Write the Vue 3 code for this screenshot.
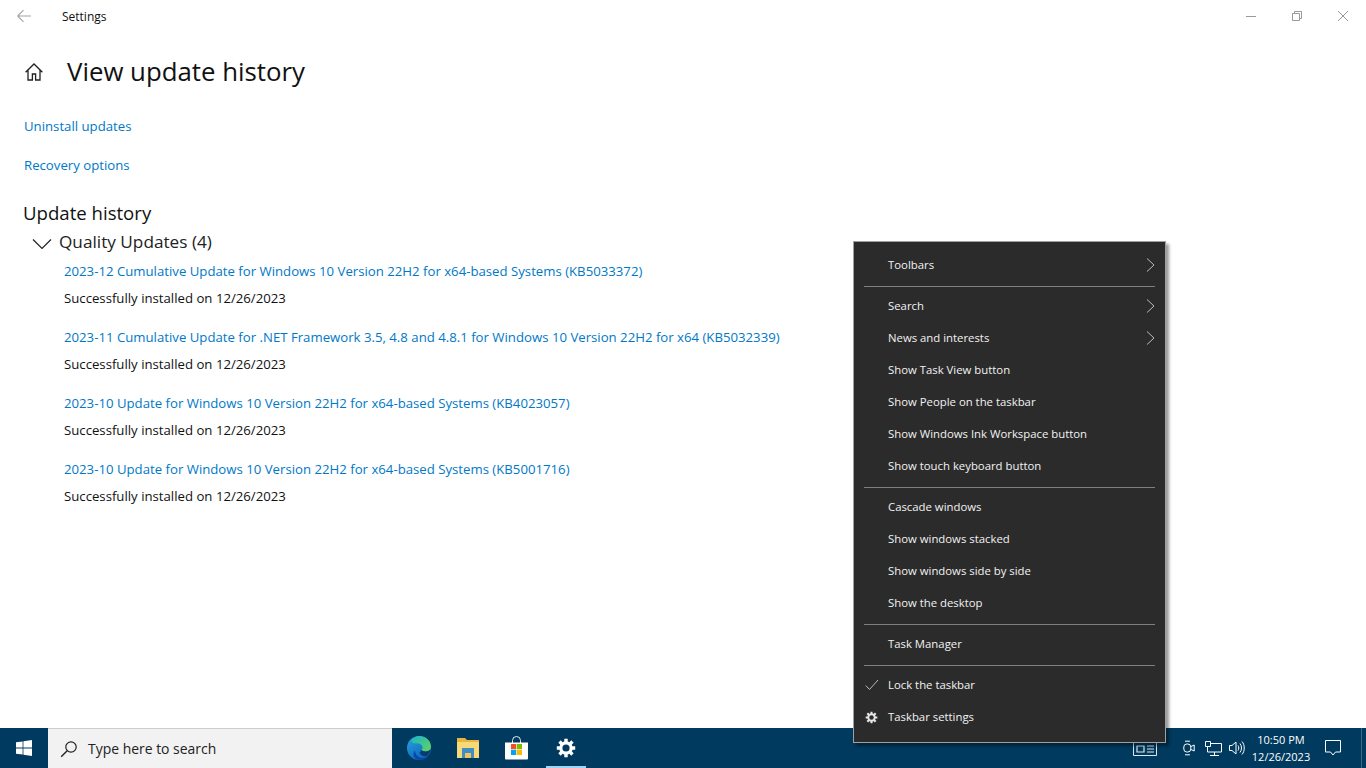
<template>
  <div class="screen">
    <div class="window">
      <header class="titlebar">
        <svg class="back" width="16" height="16" viewBox="0 0 16 16">
          <path d="M15 8H2M7.500 2.200 1.700 8l5.800 5.800" fill="none" stroke="#a3a3a3" stroke-width="1.100" />
        </svg>
        <span class="app-name">Settings</span>
        <div class="win-buttons">
          <svg width="12" height="12" viewBox="0 0 12 12"><path d="M1 6.500h10" stroke="#999" fill="none" /></svg>
          <svg width="12" height="12" viewBox="0 0 12 12">
            <path d="M1.500 3.500h7v7h-7zM3.500 3.500v-2h7v7h-2" stroke="#999" fill="none" />
          </svg>
          <svg width="12" height="12" viewBox="0 0 12 12"><path d="M1 1l10 10M11 1 1 11" stroke="#999" fill="none" /></svg>
        </div>
      </header>

      <div class="page-head">
        <svg class="home" width="20" height="20" viewBox="0 0 20 20">
          <path
            d="M1.600 10.200 10 2l8.400 8.200M4 8v10h4.400v-6h3.200v6H16V8"
            fill="none"
            stroke="#222"
            stroke-width="1.300"
          />
        </svg>
        <h1>View update history</h1>
      </div>

      <div class="links">
        <a>Uninstall updates</a>
        <a>Recovery options</a>
      </div>

      <h2>Update history</h2>
      <div class="group-head">
        <svg width="20" height="12" viewBox="0 0 20 12">
          <path d="M1 1.500l9 9 9-9" fill="none" stroke="#222" stroke-width="1.200" />
        </svg>
        <span>Quality Updates (4)</span>
      </div>
      <ul class="updates">
        <li v-for="u in updates" :key="u">
          <a>{{ u }}</a>
          <p>Successfully installed on 12/26/2023</p>
        </li>
      </ul>
    </div>

    <footer class="taskbar">
      <div class="start">
        <svg width="16" height="16" viewBox="0 0 16 16">
          <path d="M0 2.300 6.600 1.400v6.200H0zM7.400 1.300 16 0v7.600H7.400zM0 8.400h6.600v6.200L0 13.700zM7.400 8.400H16V16l-8.600-1.300z" fill="#fff" />
        </svg>
      </div>
      <div class="search">
        <svg width="18" height="18" viewBox="0 0 18 18">
          <circle cx="11" cy="7" r="5.200" fill="none" stroke="#222" stroke-width="1.200" />
          <path d="M7.200 10.800 1.200 16.800" stroke="#222" stroke-width="1.400" />
        </svg>
        <span>Type here to search</span>
      </div>

      <div class="pinned">
        <div class="pin">
          <svg width="26" height="26" viewBox="0 0 26 26">
            <defs>
              <linearGradient id="edgeBody" x1="0" y1="0" x2="0.600" y2="1">
                <stop offset="0" stop-color="#2aa6dc" />
                <stop offset="1" stop-color="#0c64c0" />
              </linearGradient>
              <linearGradient id="edgeLobe" x1="0" y1="0" x2="1" y2="1">
                <stop offset="0" stop-color="#1db4c8" />
                <stop offset="1" stop-color="#63d35c" />
              </linearGradient>
            </defs>
            <circle cx="13" cy="13" r="12" fill="url(#edgeBody)" />
            <path
              d="M5 5.500C7.500 2.500 10.500 1 13 1c7 0 12 5 12 10.500 0 3-2 5-5.500 5-2 0-3.500-.8-4-1.700 1-1 1.300-2 1-3C15.800 9.300 13.300 8.200 11 8.200 8.500 8.200 6.400 9 5 5.500z"
              fill="url(#edgeLobe)"
            />
            <path
              d="M9 15.500c0 4 3 7 6.500 7.500 3 .3 5.500-.8 7-2.500-1.500 3-5 4.500-8.500 4.500-4 0-6.500-3-6.500-6 0-1.500.8-3 1.500-3.500z"
              fill="#0a47a0"
            />
            <path d="M15.500 14.800c.5 1 2 1.700 4 1.700 2 0 3.800-.8 5-2.200-.5 3-2 5.500-3.500 6.700-3 .8-6.500-.5-7.500-3.500 1 -.5 1.600-1.500 2-2.700z" fill="#0b3a6e" />
          </svg>
        </div>
        <div class="pin">
          <svg width="22" height="20" viewBox="0 0 22 20">
            <path d="M0 0h8l2 2h12v4H0z" fill="#e8b63f" />
            <path d="M0 4h22v16H0z" fill="#f8d978" />
            <path d="M5 10h12v10h-3v-5H8v5H5z" fill="#3f8fc4" />
            <path d="M8 15h6v5H8z" fill="#f0c65a" />
          </svg>
        </div>
        <div class="pin">
          <svg width="23" height="24" viewBox="0 0 23 24">
            <path d="M7.500 7V4.500a4 4 0 0 1 8 0V7" fill="none" stroke="#e8f0f5" stroke-width="1" />
            <path d="M0 6.500h23V22.500a1 1 0 0 1-1 1H1a1 1 0 0 1-1-1z" fill="#fff" />
            <path d="M6 8h5.200v5.200H6z" fill="#f25022" />
            <path d="M11.800 8H17v5.200h-5.200z" fill="#7fba00" />
            <path d="M6 13.800h5.200V19H6z" fill="#00a4ef" />
            <path d="M11.800 13.800H17V19h-5.200z" fill="#ffb900" />
          </svg>
        </div>
        <div class="pin active">
          <svg width="20" height="20" viewBox="0 0 20 20">
            <circle cx="10" cy="10" r="5.200" fill="none" stroke="#fff" stroke-width="3.200" />
            <path
              d="M10 .8v3.700M10 15.500v3.700M.8 10h3.700M15.500 10h3.700M3.500 3.500l2.600 2.600M13.900 13.900l2.600 2.600M3.500 16.500l2.600-2.600M13.900 6.100l2.600-2.600"
              stroke="#fff"
              stroke-width="3.400"
            />
          </svg>
        </div>
      </div>

      <div class="tray">
        <svg class="news" width="24" height="14" viewBox="0 0 24 14">
          <path d="M.5.500h23v13H.5z" fill="none" stroke="#dfe6ec" />
          <path d="M4 4h7v6H4z" fill="none" stroke="#dfe6ec" stroke-width="1.200" />
          <path d="M14 4h7M14 7h7M14 10h7" stroke="#dfe6ec" stroke-width="1.200" />
        </svg>
        <svg class="meet" width="12" height="16" viewBox="0 0 12 16">
          <path d="M2 1.200h5M2 14.800h5" stroke="#fff" />
          <rect x=".8" y="4" width="7" height="8" rx="3" fill="none" stroke="#fff" />
          <path d="M8 6.500l3.200-1.500v6L8 9.500" fill="none" stroke="#fff" />
        </svg>
        <svg class="net" width="17" height="15" viewBox="0 0 17 15">
          <path d="M2.500 2.500H16.500v8.500h-14z" fill="none" stroke="#fff" />
          <path d="M9.500 11v3M5 14.500h9" stroke="#fff" />
          <path d="M.5.500h5v5h-5z" fill="#003a5e" stroke="#fff" />
        </svg>
        <svg class="vol" width="16" height="16" viewBox="0 0 16 16">
          <path d="M.5 5.500h2.500l4-3.500v12l-4-3.500H.5z" fill="none" stroke="#fff" />
          <path d="M9 5.500c1 1.500 1 3.500 0 5M11 3.500c2 2.500 2 6.500 0 9M13 1.500c3 3.500 3 9.500 0 13" fill="none" stroke="#fff" />
        </svg>
        <div class="clock">
          <span>10:50 PM</span>
          <span>12/26/2023</span>
        </div>
        <svg class="notif" width="16" height="16" viewBox="0 0 16 16">
          <path d="M.5.500h15v11.500h-5l-2.500 3-2.500-3h-5z" fill="none" stroke="#fff" />
        </svg>
        <span class="show-desktop"></span>
      </div>
    </footer>

    <nav class="menu">
      <template v-for="(row, i) in menu" :key="i">
        <hr v-if="row.sep" />
        <div v-else class="menu-item">
          <span class="mark">
            <svg v-if="row.check" width="14" height="12" viewBox="0 0 14 12">
              <path d="M.8 6.500 4.500 10.500 13 1" fill="none" stroke="#bbb" stroke-width="1" />
            </svg>
            <svg v-if="row.gear" width="13" height="13" viewBox="0 0 20 20">
              <circle cx="10" cy="10" r="5" fill="none" stroke="#e6e6e6" stroke-width="3" />
              <path
                d="M10 1v3.500M10 15.500V19M1 10h3.500M15.500 10H19M3.600 3.600l2.500 2.500M13.900 13.900l2.500 2.500M3.600 16.400l2.500-2.500M13.900 6.100l2.500-2.500"
                stroke="#e6e6e6"
                stroke-width="3.200"
              />
            </svg>
          </span>
          <span class="label">{{ row.label }}</span>
          <svg v-if="row.sub" class="chev" width="9" height="14" viewBox="0 0 9 14">
            <path d="M1 .5 8 7l-7 6.500" fill="none" stroke="#bdbdbd" stroke-width="1" />
          </svg>
        </div>
      </template>
    </nav>
  </div>
</template>

<script setup>
const updates = [
  "2023-12 Cumulative Update for Windows 10 Version 22H2 for x64-based Systems (KB5033372)",
  "2023-11 Cumulative Update for .NET Framework 3.5, 4.8 and 4.8.1 for Windows 10 Version 22H2 for x64 (KB5032339)",
  "2023-10 Update for Windows 10 Version 22H2 for x64-based Systems (KB4023057)",
  "2023-10 Update for Windows 10 Version 22H2 for x64-based Systems (KB5001716)",
];

const menu = [
  { label: "Toolbars", sub: true },
  { sep: true },
  { label: "Search", sub: true },
  { label: "News and interests", sub: true },
  { label: "Show Task View button" },
  { label: "Show People on the taskbar" },
  { label: "Show Windows Ink Workspace button" },
  { label: "Show touch keyboard button" },
  { sep: true },
  { label: "Cascade windows" },
  { label: "Show windows stacked" },
  { label: "Show windows side by side" },
  { label: "Show the desktop" },
  { sep: true },
  { label: "Task Manager" },
  { sep: true },
  { label: "Lock the taskbar", check: true },
  { label: "Taskbar settings", gear: true },
];
</script>

<style scoped>
.screen {
  position: relative;
  width: 1366px;
  height: 768px;
  overflow: hidden;
  display: flex;
  flex-direction: column;
  background: #fff;
  font-family: "Open Sans", "Noto Sans", sans-serif;
  color: #000;
}

.window {
  flex: 1;
  min-height: 0;
}

.titlebar {
  height: 32px;
  display: flex;
  align-items: center;
  padding-left: 16px;
}

.back {
  margin-right: 30px;
}

.app-name {
  font-size: 12px;
  color: #111;
}

.win-buttons {
  margin-left: auto;
  display: flex;
  gap: 34px;
  padding-right: 17px;
}

.page-head {
  display: flex;
  align-items: center;
  padding: 20px 0 0 24px;
  height: 38px;
}

.home {
  margin-right: 23px;
  margin-top: 1px;
}

h1 {
  margin: 0;
  font-size: 25.800px;
  font-weight: 400;
  color: #111;
}

.links {
  display: flex;
  flex-direction: column;
  gap: 19px;
  padding: 26px 0 0 24px;
  font-size: 13.200px;
  line-height: 20px;
}

a {
  color: #0078c8;
}

h2 {
  margin: 25px 0 0 23px;
  font-size: 18.600px;
  line-height: 26px;
  font-weight: 400;
  color: #111;
}

.group-head {
  display: flex;
  align-items: center;
  gap: 7px;
  padding: 4px 0 0 32px;
  font-size: 17.200px;
  line-height: 23px;
  color: #222;
}

.group-head svg {
  margin-top: 4px;
}

.updates {
  list-style: none;
  margin: 0;
  padding: 8px 0 0 64px;
  font-size: 13.200px;
  line-height: 20px;
}

.updates li {
  height: 66px;
}

.updates p {
  margin: 7px 0 0;
  color: #111;
}

.taskbar {
  height: 40px;
  flex-shrink: 0;
  display: flex;
  background: #003a5e;
}

.start {
  width: 48px;
  display: flex;
  align-items: center;
  justify-content: center;
  background: #003a60;
}

.search {
  width: 344px;
  display: flex;
  align-items: center;
  gap: 10px;
  box-sizing: border-box;
  padding-left: 12px;
  background: #f2f2f2;
  border-top: 1px solid #ccc;
  font-size: 13.950px;
  color: #222;
}

.pinned {
  display: flex;
  padding-left: 3px;
}

.pin {
  width: 48.800px;
  position: relative;
  display: flex;
  align-items: center;
  justify-content: center;
}

.pin.active::after {
  content: "";
  position: absolute;
  left: 4.400px;
  bottom: 0;
  width: 40px;
  height: 2px;
  background: #a0d4f5;
}

.tray {
  margin-left: auto;
  display: flex;
  align-items: center;
  color: #fff;
}

.news {
  margin-right: 26px;
  margin-top: 1px;
}

.meet {
  margin-right: 10px;
}

.net {
  margin-right: 7px;
}

.vol {
  margin-right: 6px;
}

.clock {
  width: 60px;
  display: flex;
  flex-direction: column;
  align-items: center;
  font-size: 11px;
  line-height: 17px;
  white-space: nowrap;
}

.notif {
  margin: 0 20px 0 14px;
}

.show-desktop {
  width: 1px;
  height: 40px;
  margin-right: 4px;
  background: #3d6a87;
}

/* context menu sits over the taskbar */
.menu {
  position: absolute;
  left: 853px;
  top: 241px;
  width: 311px;
  padding: 7px 0 9px;
  background: #2b2b2b;
  border: 1px solid #a0a0a0;
  box-shadow: 3px 3px 3px rgba(0, 0, 0, 0.4);
  color: #f2f2f2;
  font-size: 11.350px;
}

.menu-item {
  height: 32px;
  display: flex;
  align-items: center;
  padding-left: 11px;
}

.mark {
  width: 23px;
  flex-shrink: 0;
  display: flex;
}

.label {
  margin-top: -2px;
}

.chev {
  margin-left: auto;
  margin-right: 10px;
}

hr {
  height: 1px;
  margin: 5px 10px 3px;
  border: 0;
  background: #808080;
}
</style>
